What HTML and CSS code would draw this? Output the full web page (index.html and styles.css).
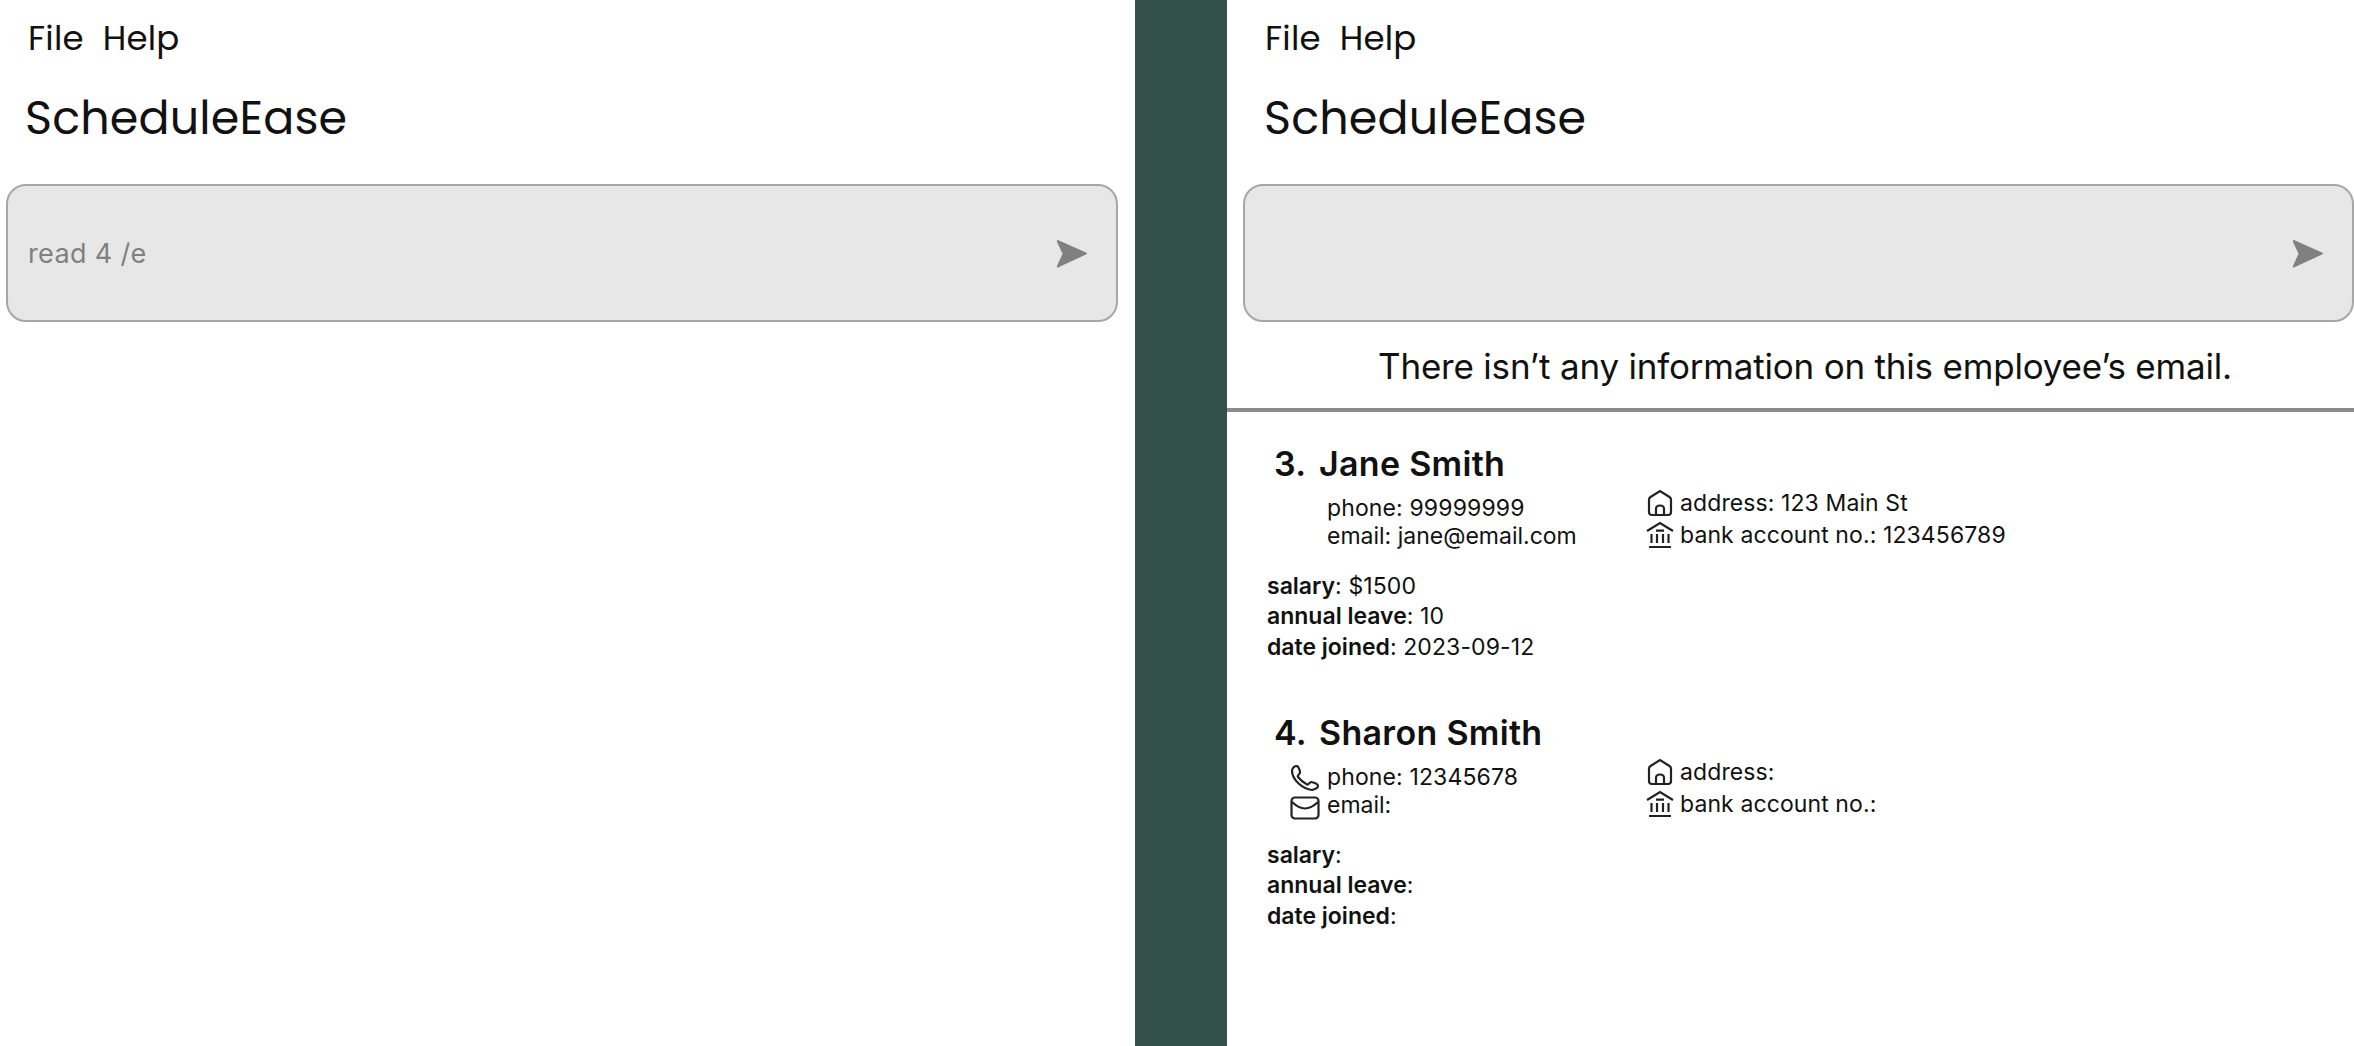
FILE: index.html
```html
<!DOCTYPE html>
<html lang="en">
<head>
<meta charset="utf-8">
<title>ScheduleEase</title>
<link rel="stylesheet" href="styles.css">
</head>
<body>
<svg class="sprite" aria-hidden="true">
  <symbol id="send" viewBox="0 0 32 30"><path d="M2.500 1.200 30 13.500Q32 14.500 30 15.500L2.500 28.200Q.5 29 1 27L6.500 14.700 1 3Q.5.500 2.500 1.200Z"/></symbol>
  <symbol id="home" viewBox="0 0 26 28"><path d="M2 10.500Q2 9 3.500 8L13 2 22.500 8Q24 9 24 10.500V23Q24 26 21 26H5Q2 26 2 23ZM9 26V20Q9 16.500 13 16.500T17 20V26"/></symbol>
  <symbol id="bank" viewBox="0 0 28 28"><path d="M1 10 14 2 27 10M10 9.700H18M5.500 13V22M11 13V22M17 13V22M22.500 13V22M3 26H25"/></symbol>
  <symbol id="phone" viewBox="0 0 30 28"><path d="M2 6.500Q3 2 7 2C9 3 10 7 10 8.500S7 11 8 13Q12 18 17 20.500C19 21 19 18 21.500 18Q28 19.500 28 22T22 26C13 25 2 16 2 6.500Z"/></symbol>
  <symbol id="mail" viewBox="0 0 30 24"><rect x="1.500" y="1.500" width="27" height="21" rx="3.500"/><path d="M2 6Q9 12.500 15 12.500T28 6"/></symbol>
</svg>
<div class="app">
  <section class="panel">
    <nav class="menu"><span>File</span><span>Help</span></nav>
    <h1 class="brand">ScheduleEase</h1>
    <div class="command"><span class="typed">read 4 /e</span><svg class="send"><use href="#send"/></svg></div>
  </section>
  <div class="divider"></div>
  <section class="panel result">
    <nav class="menu"><span>File</span><span>Help</span></nav>
    <h1 class="brand">ScheduleEase</h1>
    <div class="command"><span class="typed"></span><svg class="send"><use href="#send"/></svg></div>
    <p class="message">There isn’t any information on this employee’s email.</p>
    <article class="employee">
      <h2><span class="num">3.</span><span>Jane Smith</span></h2>
      <div class="details">
        <div class="contact">
          <p><i class="slot"></i><span class="tel">phone: 99999999</span></p>
          <p><i class="slot"></i><span>email: jane@email.com</span></p>
        </div>
        <div class="place">
          <p><svg class="home"><use href="#home"/></svg><span>address: 123 Main St</span></p>
          <p><svg class="bank"><use href="#bank"/></svg><span>bank account no.: 123456789</span></p>
        </div>
      </div>
      <div class="facts">
        <p><b>salary</b>: $1500</p>
        <p><b>annual leave</b>: 10</p>
        <p><b>date joined</b>: 2023-09-12</p>
      </div>
    </article>
    <article class="employee">
      <h2><span class="num">4.</span><span>Sharon Smith</span></h2>
      <div class="details">
        <div class="contact">
          <p><i class="slot"><svg class="phone"><use href="#phone"/></svg></i><span class="tel">phone: 12345678</span></p>
          <p><i class="slot"><svg class="mail"><use href="#mail"/></svg></i><span>email:</span></p>
        </div>
        <div class="place">
          <p><svg class="home"><use href="#home"/></svg><span>address:</span></p>
          <p><svg class="bank"><use href="#bank"/></svg><span>bank account no.:</span></p>
        </div>
      </div>
      <div class="facts">
        <p><b>salary</b>:</p>
        <p><b>annual leave</b>:</p>
        <p><b>date joined</b>:</p>
      </div>
    </article>
  </section>
</div>
</body>
</html>
```
FILE: styles.css
```css
* { box-sizing: border-box; margin: 0; padding: 0; }
body { background: #fff; color: #111; font-family: Inter, "Liberation Sans", sans-serif; overflow: hidden; }
.sprite { display: none; }
.app { display: grid; grid-template-columns: 1134.5px 92.5px 1127px; height: 1046px; }
.divider { background: #335148; }
.menu { display: flex; gap: 19px; height: 74px; padding: 17px 0 0 28px; font-family: Poppins, Inter, sans-serif; font-feature-settings: "cv11"; font-size: 34px; line-height: 42px; letter-spacing: .2px; }
.brand { height: 110px; padding: 17px 0 0 25px; font-family: Poppins, Inter, sans-serif; font-feature-settings: "cv11"; font-size: 46px; font-weight: 400; line-height: 54px; letter-spacing: .15px; }
.command { display: flex; align-items: center; justify-content: space-between; width: 1112px; height: 138px; margin-left: 6px; padding: 2px 28px 0 20px; border: 2px solid #a7a7a7; border-radius: 20px; background: #e7e7e7; }
.typed { color: #808080; font-size: 27px; line-height: 34px; letter-spacing: .35px; }
.send { width: 32px; height: 30px; fill: #808080; }
.result .menu { padding-left: 38px; }
.result .brand { padding-left: 37px; }
.result .command { width: 1111px; margin-left: 16px; }
.message { height: 90px; padding: 23px 0 0 151px; border-bottom: 4px solid #8b8b8b; font-size: 35px; line-height: 42px; letter-spacing: -.2px; }
.employee { height: 269px; padding: 31px 0 0 40px; }
h2 { display: flex; height: 45px; padding-left: 7px; font-size: 34px; font-weight: 600; line-height: 42px; letter-spacing: .3px; }
.num { width: 45px; }
.details { display: flex; height: 83px; font-size: 23px; line-height: 28px; }
.contact { width: 379px; padding-left: 21px; padding-top: 6px; }
.contact p, .place p { display: flex; }
.tel { letter-spacing: .13px; }
.slot { width: 39px; height: 28px; padding-left: 2px; }
.phone, .mail, .home, .bank { display: block; fill: none; stroke: #222; stroke-width: 2.2; }
.phone { width: 30px; height: 28px; margin-top: 1px; }
.mail { width: 30px; height: 24px; margin-top: 5px; }
.place { padding-top: 1px; letter-spacing: .1px; }
.place p { height: 32px; }
.home { width: 26px; height: 28px; margin: 0 7px 0 1px; }
.bank { width: 28px; height: 28px; margin: 0 6px 0 0; }
.facts { font-size: 23px; line-height: 30.4px; letter-spacing: .1px; }
.facts b { font-weight: 600; letter-spacing: 0; }
```
